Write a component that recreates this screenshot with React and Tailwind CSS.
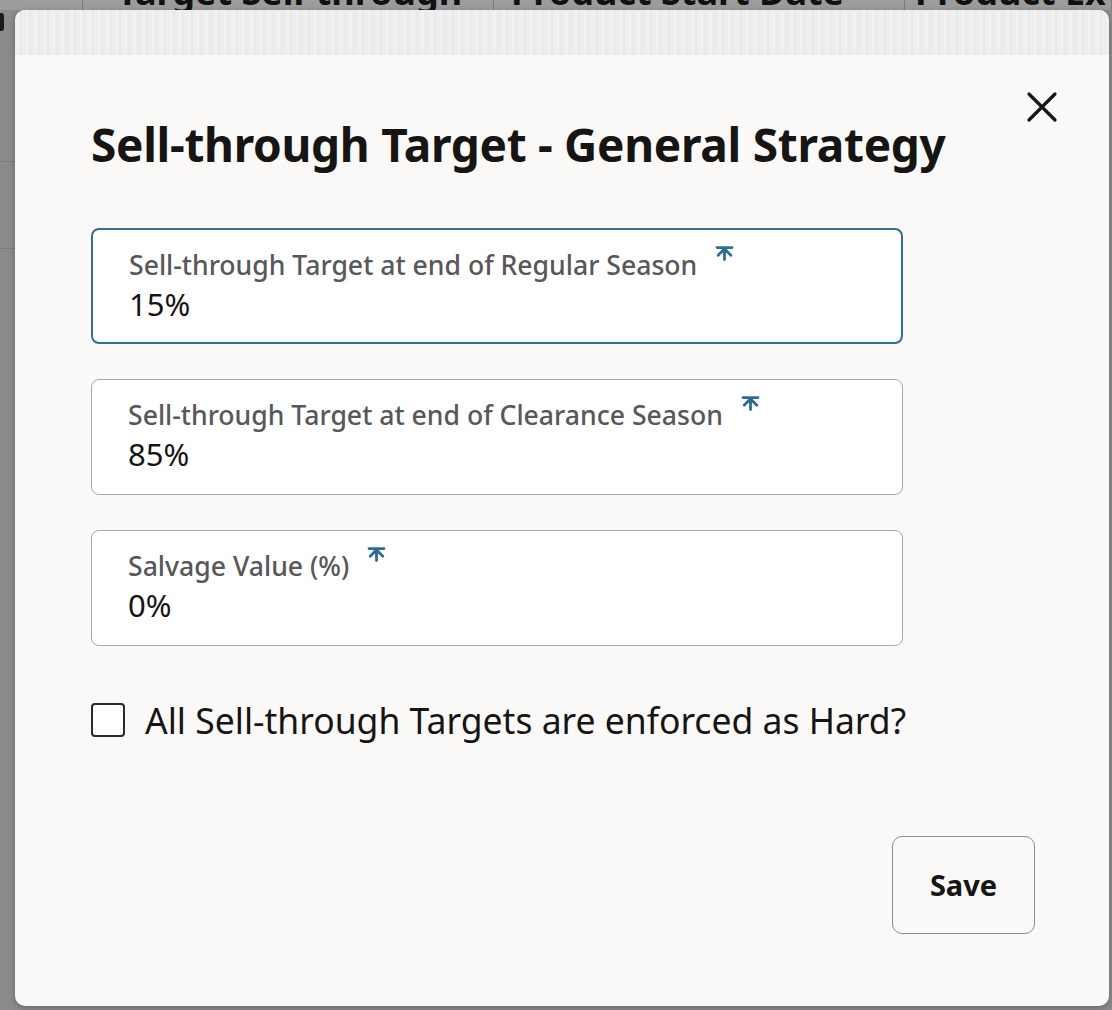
import React, { useState } from "react";

function RequiredMark() {
    return (
        <svg width="19" height="15" viewBox="0 0 19 15" className="shrink-0" aria-hidden="true">
            <path d="M2 1.6h15M9.5 1.6v12M9.5 2.8L3.2 9.2M9.5 2.8L15.8 9.2" stroke="#2c6d92" strokeWidth="2.8" strokeLinecap="round" fill="none" />
        </svg>
    );
}

function Field({ label, value, focused }) {
    return (
        <div
            className={`w-[812px] h-[116px] bg-white rounded-[8px] pl-[36px] pt-[17px] ${focused
                ? "border-[2.5px] border-[#32708f]"
                : "border border-[#a9a8a6]"
                }`}
        >
            <div className="flex items-start gap-[18px]">
                <span className="text-[26.6px] leading-[36px] text-[#58575a] font-medium">{label}</span>
                <span className="-mt-[1px]">
                    <RequiredMark />
                </span>
            </div>
            <div className="text-[31px] leading-[40px] text-[#161513] mt-[1px]">{value}</div>
        </div>
    );
}

export default function App() {
    const [hard, setHard] = useState(false);

    const fields = [
        { label: "Sell-through Target at end of Regular Season", value: "15%", focused: true },
        { label: "Sell-through Target at end of Clearance Season", value: "85%" },
        { label: "Salvage Value (%)", value: "0%" },
    ];

    const columns = [
        { label: "Target Sell-through", width: "w-[411px]", pad: "pl-[34px]" },
        { label: "Product Start Date", width: "w-[411px]", pad: "pl-[17px]" },
        { label: "Product Ex", width: "flex-1", pad: "pl-[10px]" },
    ];

    return (
        <div className="relative w-[1112px] h-[1010px] overflow-hidden bg-[#8b8b8b] font-['Noto_Sans',sans-serif]">
            {/* Page behind the dialog */}
            <div className="flex h-[10px] bg-[#9c9c9c] overflow-hidden">
                <div className="w-[83px] shrink-0 border-r border-[#7a7a7a]" />
                {columns.map(c => (
                    <div key={c.label} className={`${c.width} shrink-0 overflow-hidden border-r border-[#7a7a7a] ${c.pad}`}>
                        <div className="-mt-[26px] text-[36px] leading-[36px] font-bold text-[#111] whitespace-nowrap">
                            {c.label}
                        </div>
                    </div>
                ))}
            </div>
            <div className="w-[4px] h-[18px] mt-[3px] bg-[#1a1a1a] rounded-r-[3px]" />
            <div className="h-[131px] w-[15px] border-b border-[#7c7c7c]" />
            <div className="h-[87px] w-[15px] border-b border-[#7c7c7c]" />

            {/* Dialog */}
            <div className="absolute left-[15px] top-[10px] w-[1094px] h-[996px] bg-[#faf9f8] rounded-[10px] overflow-hidden shadow-[0_2px_6px_rgba(0,0,0,0.25)]">
                <div className="h-[45px] bg-[repeating-linear-gradient(90deg,#ebebeb_0px,#f3f3f3_3px,#e8e8e8_6px,#f1f1f1_9px)]" />

                <button className="absolute right-[50px] top-[80px] w-[34px] h-[34px] flex items-center justify-center" aria-label="Close">
                    <svg width="32" height="32" viewBox="0 0 32 32">
                        <path d="M3 3L29 29M29 3L3 29" stroke="#161513" strokeWidth="3.2" strokeLinecap="round" />
                    </svg>
                </button>

                <div className="pl-[76px] pt-[61px]">
                    <h1 className="text-[46px] leading-[56px] font-bold text-[#161513] tracking-[-0.3px]">
                        Sell-through Target - General Strategy
                    </h1>

                    <div className="flex flex-col gap-[35px] mt-[56px]">
                        {fields.map(f => (
                            <Field key={f.label} {...f} />
                        ))}
                    </div>

                    <label className="flex items-center gap-[20px] mt-[52px] cursor-pointer">
                        <span
                            onClick={() => setHard(!hard)}
                            className="w-[34px] h-[34px] shrink-0 rounded-[4px] border-[2.5px] border-[#2b2a28] bg-white"
                        />
                        <span className="text-[35.5px] leading-[44px] text-[#161513]">
                            All Sell-through Targets are enforced as Hard?
                        </span>
                    </label>
                </div>

                <div className="flex justify-end pr-[74px] mt-[94px]">
                    <button className="w-[143px] h-[98px] rounded-[10px] border-[1.5px] border-[#8f8e8c] bg-[#faf9f8] text-[29px] font-bold text-[#161513]">
                        Save
                    </button>
                </div>
            </div>
        </div>
    );
}
